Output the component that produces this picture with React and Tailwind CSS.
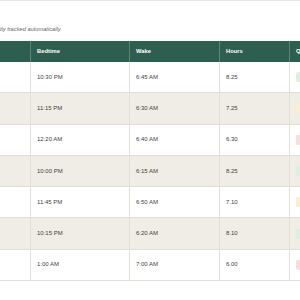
import React from "react";

const rows = [
  { d: "Mon", bed: "10:30 PM", wake: "6:45 AM", hours: "8.25", q: "Good" },
  { d: "Tue", bed: "11:15 PM", wake: "6:30 AM", hours: "7.25", q: "Fair" },
  { d: "Wed", bed: "12:20 AM", wake: "6:40 AM", hours: "6.30", q: "Poor" },
  { d: "Thu", bed: "10:00 PM", wake: "6:15 AM", hours: "8.25", q: "Good" },
  { d: "Fri", bed: "11:45 PM", wake: "6:50 AM", hours: "7.10", q: "Fair" },
  { d: "Sat", bed: "10:15 PM", wake: "6:20 AM", hours: "8.10", q: "Good" },
  { d: "Sun", bed: "1:00 AM", wake: "7:00 AM", hours: "6.00", q: "Poor" },
];

const badge = {
  Good: "bg-[#dcefe3] text-[#2d6a4f]",
  Fair: "bg-[#fcefcf] text-[#8a6a1c]",
  Poor: "bg-[#f9dddb] text-[#9b3b35]",
};

export default function App() {
  return (
    <div
      className="w-[300px] h-[300px] overflow-hidden bg-white"
      style={{ fontFamily: '"Liberation Sans", Arial, sans-serif' }}
    >
      <div className="h-px bg-[#e6e6e6]" />
      <div className="-ml-[60px] w-[440px]">
        <p className="mt-[25px] ml-[33px] text-[5.7px] leading-[7px] italic text-[#666]">
          Sleep quality tracked automatically.
        </p>
        <div className="mt-[8px] grid grid-cols-[91px_99px_90px_70px_90px]">
          {["Night", "Bedtime", "Wake", "Hours", "Quality"].map((h, i) => (
            <div
              key={h}
              className={`h-[21px] flex items-center px-[6px] bg-[#2e5e4f] text-white font-bold text-[5.8px] ${
                i < 4 ? "border-r border-[#5f8578]" : ""
              }`}
            >
              {h}
            </div>
          ))}
          {rows.map((r, idx) => {
            const bg = idx % 2 === 1 ? "bg-[#f0ede6]" : "bg-white";
            const cell = `h-[31.3px] flex items-center px-[6px] text-[6px] text-[#3f3f3f] border-b border-[#e3dfd7] ${bg}`;
            return (
              <React.Fragment key={idx}>
                <div className={`${cell} border-r`}>{r.d}</div>
                <div className={`${cell} border-r`}>{r.bed}</div>
                <div className={`${cell} border-r`}>{r.wake}</div>
                <div className={`${cell} border-r`}>{r.hours}</div>
                <div className={cell}>
                  <span className={`h-[10px] px-[8px] flex items-center rounded-[2px] ${badge[r.q]}`}>
                    {r.q}
                  </span>
                </div>
              </React.Fragment>
            );
          })}
        </div>
      </div>
    </div>
  );
}
